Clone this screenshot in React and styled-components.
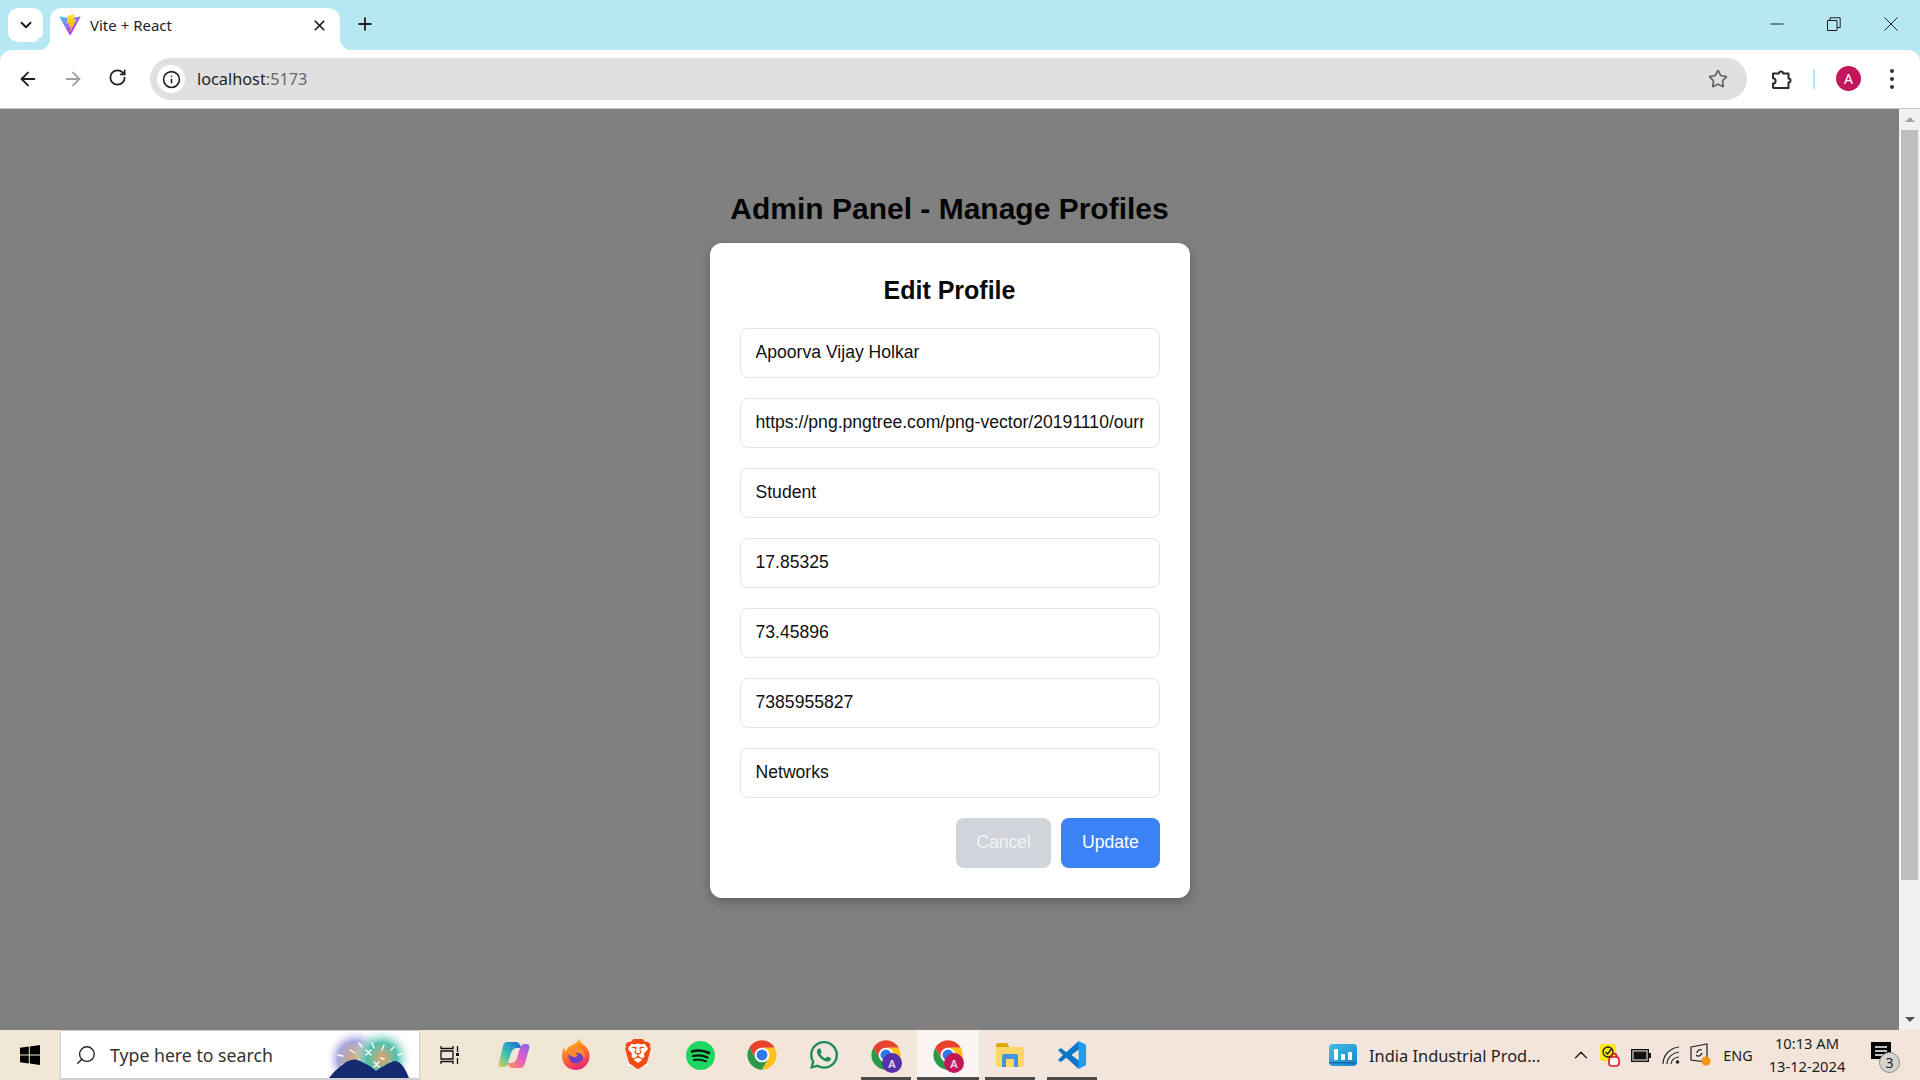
import React from 'react'
import styled, { createGlobalStyle } from 'styled-components'
import { ArrowLeft, ArrowRight, ChevronDown, ChevronUp, Info, Plus, RotateCw, Search, Star, X } from 'lucide-react'
import { FaWhatsapp } from 'react-icons/fa'
import { SiBrave } from 'react-icons/si'

const GlobalStyle = createGlobalStyle`
  html, body {
    margin: 0;
    height: 100%;
    overflow: hidden;
  }
  * {
    box-sizing: border-box;
  }
`

const Screen = styled.div`
  width: 1920px;
  height: 1080px;
  display: flex;
  flex-direction: column;
  font-family: "Liberation Sans", Arial, sans-serif;
`

/* browser chrome */
const TabStrip = styled.div`
  height: 50px;
  flex: none;
  background: #b6e7f3;
  display: flex;
  align-items: flex-end;
  padding-left: 8px;
`
const TabListButton = styled.div`
  width: 35px;
  height: 34px;
  margin-bottom: 8px;
  border-radius: 10px;
  background: #fff;
  display: flex;
  align-items: center;
  justify-content: center;
  color: #1f1f1f;
`
const Tab = styled.div`
  position: relative;
  width: 290px;
  height: 42px;
  margin-left: 7px;
  padding: 0 12px 8px 9px;
  background: #fff;
  border-radius: 12px 12px 0 0;
  display: flex;
  align-items: center;
  color: #1f1f1f;
  font-family: "Noto Sans", sans-serif;
  font-size: 15px;

  &::before,
  &::after {
    content: "";
    position: absolute;
    bottom: 0;
    width: 12px;
    height: 12px;
  }
  &::before {
    left: -12px;
    background: radial-gradient(circle at 0 0, #b6e7f3 12px, #fff 12.5px);
  }
  &::after {
    right: -12px;
    background: radial-gradient(circle at 100% 0, #b6e7f3 12px, #fff 12.5px);
  }
`
const TabTitle = styled.span`
  flex: 1;
  margin-left: 9px;
`
const NewTab = styled.div`
  margin: 0 0 9px 8px;
  width: 34px;
  height: 34px;
  display: flex;
  align-items: center;
  justify-content: center;
  color: #1f1f1f;
`
const WindowControls = styled.div`
  margin-left: auto;
  height: 50px;
  display: flex;
  align-items: center;
  padding: 0 22px 2px 0;
  gap: 43px;
  color: #1f1f1f;
`
const Toolbar = styled.div`
  height: 59px;
  flex: none;
  background: #b6e7f3;
`
const ToolbarInner = styled.div`
  height: 100%;
  background: #fff;
  border-radius: 12px 12px 0 0;
  border-bottom: 1px solid #c8c8c8;
  display: flex;
  align-items: center;
  padding: 0 14px 0 0;
`
const NavGroup = styled.div`
  display: flex;
  padding-left: 5px;
  width: 150px;
`
const NavButton = styled.div`
  width: 45px;
  display: flex;
  justify-content: center;
  color: ${p => (p.$off ? '#a3a3a3' : '#1f1f1f')};
`
const AddressBar = styled.div`
  width: 1597px;
  height: 42px;
  border-radius: 21px;
  background: #e0e0e0;
  display: flex;
  align-items: center;
  padding: 0 19px 0 7px;
  font-family: "Noto Sans", sans-serif;
  font-size: 16.3px;
  color: #1f1f1f;
`
const InfoChip = styled.div`
  width: 28px;
  height: 28px;
  border-radius: 50%;
  background: #fff;
  display: flex;
  align-items: center;
  justify-content: center;
  margin-right: 12px;
`
const Port = styled.span`
  color: #666;
  flex: 1;
`
const ToolSide = styled.div`
  flex: 1;
  display: flex;
  align-items: center;
  padding-left: 22px;
  color: #1f1f1f;
`
const Divider = styled.div`
  width: 2px;
  height: 20px;
  background: #b6e7f3;
  margin: 0 21px 0 20px;
`
const Avatar = styled.div`
  width: 25px;
  height: 25px;
  margin-bottom: 1px;
  border-radius: 50%;
  background: #c2185b;
  color: #fff;
  font-family: "Noto Sans", sans-serif;
  font-size: 14px;
  display: flex;
  align-items: center;
  justify-content: center;
`
const MenuDots = styled.div`
  margin-left: 29px;
  display: flex;
  flex-direction: column;
  gap: 4px;

  span {
    width: 4px;
    height: 4px;
    border-radius: 50%;
    background: #333;
  }
`

/* page area */
const Viewport = styled.div`
  flex: 1;
  min-height: 0;
  display: flex;
`
const Page = styled.main`
  flex: 1;
  background: #808080;
  display: flex;
  flex-direction: column;
  align-items: center;
  padding-top: 83px;
`
const PageTitle = styled.h1`
  margin: 0 0 17px;
  font-size: 30px;
  font-weight: 700;
  line-height: 34px;
  color: #050505;
`
const Modal = styled.form`
  width: 480px;
  padding: 30px;
  background: #fff;
  border-radius: 12px;
  box-shadow: 0 4px 12px rgba(0, 0, 0, 0.25);
`
const ModalTitle = styled.h2`
  margin: 0 0 21px;
  font-size: 25px;
  font-weight: 700;
  line-height: 34px;
  text-align: center;
  color: #0a0a0a;
`
const Field = styled.input`
  display: block;
  width: 100%;
  height: 50px;
  margin-bottom: 20px;
  padding: 0 15px 2px;
  border: 1px solid #e5e5e5;
  border-radius: 8px;
  outline: none;
  background: #fff;
  color: #111;
  font-family: "Liberation Sans", Arial, sans-serif;
  font-size: 17.6px;
`
const Actions = styled.div`
  display: flex;
  justify-content: flex-end;
  gap: 10px;
`
const ActionButton = styled.button`
  height: 50px;
  padding: 0 ${p => (p.$primary ? 20.8 : 20.2)}px 2px;
  border: 0;
  border-radius: 8px;
  background: ${p => (p.$primary ? '#3b82f6' : '#d1d5db')};
  color: ${p => (p.$primary ? '#fff' : '#f3f4f6')};
  font-family: "Liberation Sans", Arial, sans-serif;
  font-size: 17.6px;
`
const Scrollbar = styled.div`
  width: 21px;
  flex: none;
  background: #f1f1f1;
  display: flex;
  flex-direction: column;
  align-items: center;
`
const ArrowUpCap = styled.div`
  height: 21px;
  flex: none;
  padding-top: 8px;

  &::before {
    content: "";
    display: block;
    border: 5px solid transparent;
    border-top: 0;
    border-bottom: 5px solid #a3a3a3;
  }
`
const ArrowDownCap = styled.div`
  margin-top: auto;
  height: 13px;
  flex: none;

  &::before {
    content: "";
    display: block;
    border: 5px solid transparent;
    border-bottom: 0;
    border-top: 5px solid #505050;
  }
`
const Thumb = styled.div`
  width: 17px;
  height: 750px;
  flex: none;
  background: #bebebe;
`

/* windows taskbar */
const Taskbar = styled.footer`
  height: 50px;
  flex: none;
  background: linear-gradient(90deg, #f0e6d6 0%, #f0e6d6 30%, #f3e6dc 50%, #f3e4da 100%);
  display: flex;
  align-items: stretch;
  color: #1c1c1c;
  font-family: "Noto Sans", sans-serif;
`
const StartButton = styled.div`
  width: 60px;
  display: flex;
  align-items: center;
  justify-content: center;
`
const SearchBox = styled.div`
  width: 360px;
  background: #fff;
  border: 1px solid #cfcfcf;
  border-bottom-width: 2px;
  display: flex;
  align-items: center;
  padding: 0 7px 0 14px;
  font-size: 17.7px;
  color: #333;
`
const SearchGlass = styled(Search)`
  transform: scaleX(-1);
`
const SearchText = styled.span`
  margin-left: 13px;
  flex: 1;
`
const TaskList = styled.div`
  display: flex;
  align-items: stretch;
`
const TaskSlot = styled.div`
  position: relative;
  width: ${p => p.$width || 62}px;
  margin-left: ${p => p.$gap || 0}px;
  display: flex;
  align-items: center;
  justify-content: center;
  background: ${p => (p.$active ? '#faf5f1' : 'transparent')};

  ${p => p.$open && `
    &::after {
      content: "";
      position: absolute;
      bottom: 0;
      height: 3px;
      left: ${p.$active ? 0 : 6}px;
      right: ${p.$active ? 0 : 6}px;
      background: #4a4a4a;
    }
  `}
`
const LogoStack = styled.div`
  position: relative;
  width: 32px;
  height: 32px;
`
const ProfileBadge = styled.div`
  position: absolute;
  right: 0;
  bottom: -2px;
  width: 20px;
  height: 20px;
  border-radius: 50%;
  background: ${p => p.$color};
  color: #e9d8ee;
  font-size: 11px;
  font-weight: 600;
  display: flex;
  align-items: center;
  justify-content: center;
`
const BraveMark = styled.div`
  position: relative;
  width: 30px;
  height: 32px;
  display: flex;
  color: #f4490f;

  &::before {
    content: "";
    position: absolute;
    inset: 5px;
    background: #fff;
  }
  svg {
    position: relative;
  }
`
const Tray = styled.div`
  margin-left: auto;
  display: flex;
  align-items: center;
`
const NewsWidget = styled.div`
  display: flex;
  align-items: center;
  gap: 12px;
  width: 237px;
  font-size: 16.4px;
  color: #222;
`
const TrayIcon = styled.div`
  width: 30px;
  display: flex;
  justify-content: center;
  align-items: center;
`
const Lang = styled.div`
  width: 44px;
  text-align: center;
  font-size: 14.4px;
`
const Clock = styled.div`
  width: 94px;
  text-align: center;
  font-size: 14.7px;
  line-height: 23px;
`
const Notify = styled.div`
  position: relative;
  width: 51px;
  padding-left: 17px;
  margin-right: 15px;
`
const NotifyCount = styled.div`
  position: absolute;
  left: 25px;
  top: 10px;
  width: 21px;
  height: 21px;
  border-radius: 50%;
  background: #d6d2ce;
  border: 1px solid #8a8a8a;
  font-size: 14px;
  display: flex;
  align-items: center;
  justify-content: center;
  color: #222;
`

function ViteLogo() {
  return (
    <svg width="22" height="22" viewBox="0 0 410 404">
      <defs>
        <linearGradient id="viteA" x1="6" y1="33" x2="235" y2="344" gradientUnits="userSpaceOnUse">
          <stop stopColor="#41D1FF" />
          <stop offset="1" stopColor="#BD34FE" />
        </linearGradient>
        <linearGradient id="viteB" x1="194" y1="8" x2="236" y2="292" gradientUnits="userSpaceOnUse">
          <stop stopColor="#FFEA83" />
          <stop offset="0.08" stopColor="#FFDD35" />
          <stop offset="1" stopColor="#FFA800" />
        </linearGradient>
      </defs>
      <path fill="url(#viteA)" d="M399.641 59.5246L215.643 388.545C211.844 395.338 202.084 395.378 198.228 388.618L10.5817 59.5563C6.38087 52.1896 12.6802 43.2665 21.0281 44.7586L205.223 77.6824C206.398 77.8924 207.601 77.8904 208.776 77.6763L389.119 44.8058C397.439 43.2894 403.768 52.1434 399.641 59.5246Z" />
      <path fill="url(#viteB)" d="M292.965 1.5744L156.801 28.2552C154.563 28.6937 152.906 30.5903 152.771 32.8664L144.395 174.33C144.198 177.662 147.258 180.248 150.51 179.498L188.42 170.749C191.967 169.931 195.172 173.055 194.443 176.622L183.18 231.775C182.422 235.487 185.907 238.661 189.532 237.56L212.947 230.446C216.577 229.344 220.065 232.527 219.297 236.242L201.398 322.875C200.278 328.294 207.486 331.249 210.492 326.603L212.5 323.5L323.454 102.072C325.312 98.3645 322.108 94.137 318.036 94.9228L279.014 102.454C275.347 103.161 272.227 99.746 273.262 96.1583L298.731 7.86689C299.767 4.27314 296.636 0.855181 292.965 1.5744Z" />
    </svg>
  )
}

function PuzzleIcon() {
  return (
    <svg width="24" height="24" viewBox="0 0 24 24" fill="none" stroke="#2b2b2b" strokeWidth="2" strokeLinejoin="round">
      <path d="M4 6.5h6a2 2 0 0 1 4 0h5.5v5a2 2 0 0 1 0 4v5.5H4.5a1 1 0 0 1-.5-1v-3.5a2.6 2.6 0 0 0 0-5.2z" />
    </svg>
  )
}

function WindowGlyph({ type }) {
  return (
    <svg width="14" height="14" viewBox="0 0 14 14" fill="none" stroke="#1f1f1f" strokeWidth="1">
      {type === 'min' && <path d="M0.5 7h13" />}
      {type === 'max' && <path d="M0.5 3.5h9.5v10H0.5zM3 3.5V0.8h10.2v9.7H10" />}
      {type === 'close' && <path d="M0.5 0.5l13 13M13.5 0.5l-13 13" />}
    </svg>
  )
}

function WindowsLogo() {
  return (
    <svg width="20" height="20" viewBox="0 0 20 20" fill="#000">
      <path d="M0 2.8l8.8-1.2v8H0zM9.8 1.4L20 0v9.6H9.8zM0 10.6h8.8v7.9L0 17.2zM9.8 10.6H20V20L9.8 18.6z" />
    </svg>
  )
}

function BloomArt() {
  return (
    <svg width="86" height="46" viewBox="0 0 86 46">
      <defs>
        <radialGradient id="bloomL" cx="0.5" cy="0.55" r="0.5">
          <stop offset="0" stopColor="#d6a86a" />
          <stop offset="0.6" stopColor="#a7a6dd" />
          <stop offset="1" stopColor="#f3f0fb" stopOpacity="0" />
        </radialGradient>
        <radialGradient id="bloomR" cx="0.5" cy="0.55" r="0.5">
          <stop offset="0" stopColor="#e9a26c" />
          <stop offset="0.5" stopColor="#4cc2ad" />
          <stop offset="1" stopColor="#e6f7f3" stopOpacity="0" />
        </radialGradient>
      </defs>
      <circle cx="30" cy="24" r="30" fill="url(#bloomL)" />
      <circle cx="56" cy="23" r="30" fill="url(#bloomR)" />
      <g stroke="#fff" strokeWidth="1.4" strokeLinecap="round">
        <path d="M12 23l5 1M24 18l5 3M33 11l3 4M46 11l2 5M58 13l-2 5M72 23l4-1M68 15l-3 3M16 33l7-2M64 30l4 0" />
        <path d="M40 18l5 5M45 18l-5 5M48 35l5-5M53 35l-5-5M30 28l3 0M55 26l3 1" />
      </g>
      <path fill="#162a70" d="M3 46C9 38 16 33 20 30c4-2 8-3 12-2l10 5c3 2 6 4 8 6 5-4 10-6 15-9 3-2 7-1 10 2 4 4 6 9 8 14z" />
    </svg>
  )
}

function TaskViewIcon() {
  return (
    <svg width="20" height="20" viewBox="0 0 20 20" fill="none" stroke="#111" strokeWidth="1.3">
      <path d="M1 1v2.5h12V1M1 19v-2.5h12V19M1 6h12v8H1zM17.5 1v6M17.5 13v6" />
      <rect x="16" y="8" width="3" height="3" fill="#111" stroke="none" />
    </svg>
  )
}

function CopilotIcon() {
  return (
    <svg width="32" height="32" viewBox="0 0 32 32">
      <defs>
        <linearGradient id="copA" x1="0" y1="1" x2="1" y2="0">
          <stop offset="0" stopColor="#d9cf52" />
          <stop offset="0.45" stopColor="#3cc0b4" />
          <stop offset="1" stopColor="#1563d8" />
        </linearGradient>
        <linearGradient id="copB" x1="0" y1="1" x2="1" y2="0">
          <stop offset="0" stopColor="#f6a14a" />
          <stop offset="0.5" stopColor="#e75cc0" />
          <stop offset="1" stopColor="#8a62ee" />
        </linearGradient>
      </defs>
      <path fill="url(#copB)" d="M23 29h-9c-2 0-3-1-4-3l-1-2h4c3 0 5-2 6-5l3-10c1-3 2-4 5-4h2c2 0 3 2 2 5l-4 14c-1 3-2 5-4 5z" />
      <path fill="url(#copA)" d="M9 3h9c2 0 3 1 4 3l1 3h-4c-3 0-5 2-6 5l-3 10c-1 3-2 4-5 4H3c-2 0-3-2-2-5L5 7c1-3 2-4 4-4z" />
    </svg>
  )
}

function FirefoxIcon() {
  return (
    <svg width="30" height="32" viewBox="0 0 30 32">
      <defs>
        <linearGradient id="ffA" x1="0.2" y1="0" x2="0.6" y2="1">
          <stop offset="0" stopColor="#ffc21c" />
          <stop offset="0.55" stopColor="#ff6a2b" />
          <stop offset="1" stopColor="#e8227a" />
        </linearGradient>
      </defs>
      <path fill="url(#ffA)" d="M18 0c1 4 5 5 8 9 3 4 3 9 2 12-2 6-7 10-13 10C7 31 1 25 1 17c0-4 1-7 2-9 0 2 1 3 2 4 1-3 3-5 6-6 3-2 6-3 7-6z" />
      <circle cx="15" cy="17" r="7.5" fill="#6d3fc9" />
      <path fill="#ff8a2b" d="M6 13c3-4 9-6 14-3 3 2 5 6 3 10-1-5-5-7-9-6 3 1 3 3 1 4-3 0-7-1-9-5z" />
    </svg>
  )
}

function SpotifyIcon() {
  return (
    <svg width="29" height="29" viewBox="0 0 29 29">
      <circle cx="14.5" cy="14.5" r="14.5" fill="#1ed760" />
      <g fill="none" stroke="#111" strokeLinecap="round">
        <path strokeWidth="2.6" d="M6 10.5c6-1.6 12-1 17 1.5" />
        <path strokeWidth="2.2" d="M7 15c5-1.2 10-.7 14.5 1.5" />
        <path strokeWidth="1.8" d="M8 19c4-.8 8-.4 12 1.4" />
      </g>
    </svg>
  )
}

function ChromeIcon() {
  return (
    <svg width="32" height="32" viewBox="0 0 48 48">
      <circle cx="24" cy="24" r="11" fill="#fff" />
      <circle cx="24" cy="24" r="8.2" fill="#2f78ea" />
      <path fill="#e8432f" d="M24 13H43.05A22 22 0 0 0 4.95 13L14.47 29.5A11 11 0 0 1 24 13Z" />
      <path fill="#2a9a4a" d="M14.47 29.5L4.95 13A22 22 0 0 0 24 46L33.53 29.5A11 11 0 0 1 14.47 29.5Z" />
      <path fill="#fcc21b" d="M33.53 29.5L24 46A22 22 0 0 0 43.05 13H24A11 11 0 0 1 33.53 29.5Z" />
    </svg>
  )
}

function ExplorerIcon() {
  return (
    <svg width="28" height="24" viewBox="0 0 28 24">
      <path fill="#e3a30a" d="M0 2a2 2 0 0 1 2-2h9l2 3v3H0z" />
      <path fill="#fdd667" d="M0 4h26a2 2 0 0 1 2 2v16a2 2 0 0 1-2 2H2a2 2 0 0 1-2-2z" />
      <path fill="#3f96dc" d="M6 24V13a2 2 0 0 1 2-2h12a2 2 0 0 1 2 2v11h-4v-8h-8v8z" />
    </svg>
  )
}

function VsCodeIcon() {
  return (
    <svg width="30" height="30" viewBox="0 0 100 100">
      <path fill="#0a78c6" d="M72 3L31 41 13 27 3 33l17 17L3 67l10 6 18-14 41 38 4-26-28-21 28-21z" />
      <path fill="#1f9df0" d="M72 3l22 11c2 1 3 3 3 5v62c0 2-1 4-3 5L72 97z" />
    </svg>
  )
}

function NewsIcon() {
  return (
    <svg width="28" height="22" viewBox="0 0 28 22">
      <defs>
        <linearGradient id="newsBg" x1="0" y1="0" x2="1" y2="1">
          <stop offset="0" stopColor="#3ec0e8" />
          <stop offset="1" stopColor="#1a83c8" />
        </linearGradient>
      </defs>
      <rect width="28" height="22" rx="4" fill="url(#newsBg)" />
      <rect x="5" y="5" width="4" height="11" rx="1" fill="#fff" />
      <rect x="12" y="10" width="4" height="6" rx="1" fill="#fff" />
      <rect x="19" y="8" width="4" height="8" rx="1" fill="#fff" />
      <rect y="18" width="28" height="1.5" fill="#0f6aa8" />
    </svg>
  )
}

function SecurityIcon() {
  return (
    <svg width="22" height="24" viewBox="0 0 22 24">
      <rect x="0" y="1" width="16" height="17" rx="2" fill="#ffe81a" />
      <circle cx="8" cy="9" r="5" fill="none" stroke="#222" strokeWidth="1.4" />
      <path d="M5.5 9l2 2 4-5" fill="none" stroke="#222" strokeWidth="1.5" />
      <path d="M11.5 15v-2a2.5 2.5 0 0 1 5 0v2" fill="none" stroke="#e0121c" strokeWidth="1.6" />
      <rect x="9" y="14" width="10" height="9" rx="3" fill="#fff" stroke="#e0121c" strokeWidth="1.6" />
    </svg>
  )
}

function BatteryIcon() {
  return (
    <svg width="20" height="13" viewBox="0 0 20 13">
      <rect x="0.7" y="0.7" width="16.6" height="11.6" fill="none" stroke="#111" strokeWidth="1.4" />
      <rect x="2.5" y="2.5" width="13" height="8" fill="#111" />
      <rect x="18" y="4" width="2" height="5" fill="#111" />
    </svg>
  )
}

function WifiIcon() {
  return (
    <svg width="18" height="20" viewBox="0 0 18 20" fill="none" stroke="#222" strokeWidth="1.1">
      <path d="M1 19C1 10 8 3 17 2M5 19c0-6 5-11 12-12M9 19c0-3 3-7 8-7" />
      <circle cx="15.5" cy="17" r="1.8" fill="#222" stroke="none" />
    </svg>
  )
}

function SyncScreenIcon() {
  return (
    <svg width="22" height="24" viewBox="0 0 22 24">
      <path fill="none" stroke="#222" strokeWidth="1.2" d="M1 4l16-3v18L1 17z" />
      <path fill="none" stroke="#222" strokeWidth="1.3" d="M12 7c-2-1-5 0-5 3M6 12c2 2 5 1 6-2" />
      <circle cx="16" cy="18" r="4.5" fill="#f6940f" />
    </svg>
  )
}

function ChatIcon() {
  return (
    <svg width="20" height="22" viewBox="0 0 20 22">
      <path fill="#000" d="M0 0h20v17h-6l-4 4v-4H0z" />
      <path stroke="#fff" strokeWidth="1.3" d="M4 5h12M4 9h12M4 13h8" />
    </svg>
  )
}

const fields = [
  'Apoorva Vijay Holkar',
  'https://png.pngtree.com/png-vector/20191110/ourmid/pngtree-avatar-vector-icon-png-image_1978396.jpg',
  'Student',
  '17.85325',
  '73.45896',
  '7385955827',
  'Networks',
]

export default function App() {
  return (
    <Screen>
      <GlobalStyle />
      <TabStrip>
        <TabListButton><ChevronDown size={18} strokeWidth={2.6} /></TabListButton>
        <Tab>
          <ViteLogo />
          <TabTitle>Vite + React</TabTitle>
          <X size={17} strokeWidth={2.4} />
        </Tab>
        <NewTab><Plus size={20} strokeWidth={2.2} /></NewTab>
        <WindowControls>
          <WindowGlyph type="min" />
          <WindowGlyph type="max" />
          <WindowGlyph type="close" />
        </WindowControls>
      </TabStrip>

      <Toolbar>
        <ToolbarInner>
          <NavGroup>
            <NavButton><ArrowLeft size={22} strokeWidth={2} /></NavButton>
            <NavButton $off><ArrowRight size={22} strokeWidth={2} /></NavButton>
            <NavButton><RotateCw size={19} strokeWidth={2.2} /></NavButton>
          </NavGroup>
          <AddressBar>
            <InfoChip><Info size={19} strokeWidth={2} /></InfoChip>
            localhost<Port>:5173</Port>
            <Star size={20} color="#5f6368" strokeWidth={2} />
          </AddressBar>
          <ToolSide>
            <PuzzleIcon />
            <Divider />
            <Avatar>A</Avatar>
            <MenuDots><span /><span /><span /></MenuDots>
          </ToolSide>
        </ToolbarInner>
      </Toolbar>

      <Viewport>
        <Page>
          <PageTitle>Admin Panel - Manage Profiles</PageTitle>
          <Modal onSubmit={e => e.preventDefault()}>
            <ModalTitle>Edit Profile</ModalTitle>
            {fields.map(value => (
              <Field key={value} type="text" defaultValue={value} />
            ))}
            <Actions>
              <ActionButton type="button">Cancel</ActionButton>
              <ActionButton type="submit" $primary>Update</ActionButton>
            </Actions>
          </Modal>
        </Page>
        <Scrollbar>
          <ArrowUpCap />
          <Thumb />
          <ArrowDownCap />
        </Scrollbar>
      </Viewport>

      <Taskbar>
        <StartButton><WindowsLogo /></StartButton>
        <SearchBox>
          <SearchGlass size={22} strokeWidth={1.5} color="#222" />
          <SearchText>Type here to search</SearchText>
          <BloomArt />
        </SearchBox>
        <TaskList>
          <TaskSlot $width={60}><TaskViewIcon /></TaskSlot>
          <TaskSlot $gap={3}><CopilotIcon /></TaskSlot>
          <TaskSlot><FirefoxIcon /></TaskSlot>
          <TaskSlot><BraveMark><SiBrave size={30} /></BraveMark></TaskSlot>
          <TaskSlot><SpotifyIcon /></TaskSlot>
          <TaskSlot><ChromeIcon /></TaskSlot>
          <TaskSlot><FaWhatsapp size={32} color="#1c8a5c" /></TaskSlot>
          <TaskSlot $open>
            <LogoStack><ChromeIcon /><ProfileBadge $color="#5530a8">A</ProfileBadge></LogoStack>
          </TaskSlot>
          <TaskSlot $open $active>
            <LogoStack><ChromeIcon /><ProfileBadge $color="#c2185b">A</ProfileBadge></LogoStack>
          </TaskSlot>
          <TaskSlot $open><ExplorerIcon /></TaskSlot>
          <TaskSlot $open><VsCodeIcon /></TaskSlot>
        </TaskList>
        <Tray>
          <NewsWidget><NewsIcon />India Industrial Prod...</NewsWidget>
          <TrayIcon><ChevronUp size={22} strokeWidth={1.4} /></TrayIcon>
          <TrayIcon><SecurityIcon /></TrayIcon>
          <TrayIcon><BatteryIcon /></TrayIcon>
          <TrayIcon><WifiIcon /></TrayIcon>
          <TrayIcon><SyncScreenIcon /></TrayIcon>
          <Lang>ENG</Lang>
          <Clock>10:13 AM<br />13-12-2024</Clock>
          <Notify><ChatIcon /><NotifyCount>3</NotifyCount></Notify>
        </Tray>
      </Taskbar>
    </Screen>
  )
}
